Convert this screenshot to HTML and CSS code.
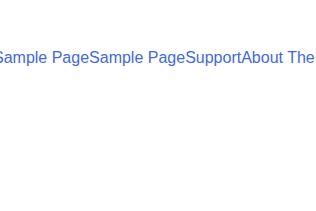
FILE: index.html
```html
<!DOCTYPE html>
<html lang="en">
<head>
    <meta charset="UTF-8">
    <meta name="viewport" content="width=device-width, initial-scale=1.0">
    <title>Menu</title>
    <link rel="stylesheet" href="styles.css">
</head>
<body>
    <nav class="menu">
        <a href="#">Sample Page</a>
        <a href="#">Sample Page</a>
        <a href="#">Support</a>
        <a href="#">About The Tests</a>
    </nav>
</body>
</html>
```

FILE: styles.css
```css
body {
    margin: 0;
    background-color: #fff;
    font-family: "Liberation Sans", Arial, sans-serif;
    overflow: hidden;
}
.menu {
    display: flex;
    white-space: nowrap;
    margin-left: -7px;
    padding-top: 49px;
    font-size: 16px;
}
.menu a {
    color: #4169e1;
    text-decoration: none;
}
```
